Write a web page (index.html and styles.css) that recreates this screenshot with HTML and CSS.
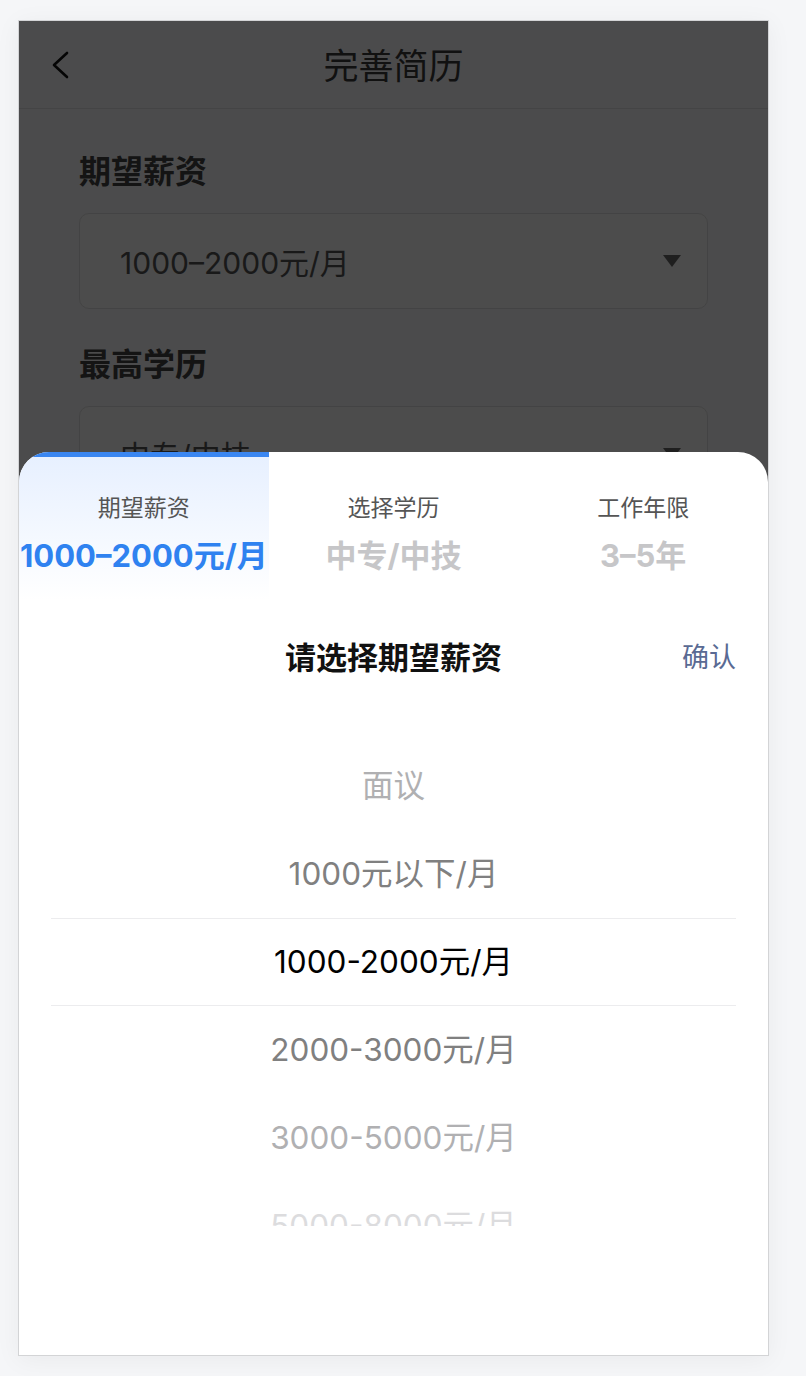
FILE: index.html
```html
<!DOCTYPE html>
<html lang="zh-CN">
<head>
  <meta charset="UTF-8">
  <meta name="viewport" content="width=device-width, initial-scale=1.0">
  <title>完善简历</title>
  <link rel="stylesheet" href="styles.css">
</head>
<body>
  <div class="phone">
    <!-- Top navigation -->
    <div class="nav">
      <svg class="nav-back" width="24" height="32" viewBox="0 0 24 32">
        <polyline points="17,3 4,15 17,27" fill="none" stroke="#111" stroke-width="2.6" stroke-linecap="round" stroke-linejoin="round"/>
      </svg>
      <div class="nav-title">完善简历</div>
      <div></div>
    </div>

    <!-- Resume form -->
    <div class="form">
      <div class="field">
        <div class="field-label">期望薪资</div>
        <div class="select"><span>1000–2000元/月</span><i class="caret"></i></div>
      </div>
      <div class="field">
        <div class="field-label">最高学历</div>
        <div class="select"><span>中专/中技</span><i class="caret"></i></div>
      </div>
    </div>

    <!-- Dark mask behind the sheet -->
    <div class="mask"></div>

    <!-- Bottom sheet with picker -->
    <div class="sheet">
      <div class="tabs">
        <div class="tab active">
          <div class="tab-name">期望薪资</div>
          <div class="tab-value">1000–2000元/月</div>
        </div>
        <div class="tab">
          <div class="tab-name">选择学历</div>
          <div class="tab-value">中专/中技</div>
        </div>
        <div class="tab">
          <div class="tab-name">工作年限</div>
          <div class="tab-value">3–5年</div>
        </div>
      </div>

      <div class="toolbar">
        <span></span>
        <span class="toolbar-title">请选择期望薪资</span>
        <span class="toolbar-ok">确认</span>
      </div>

      <div class="picker">
        <div class="picker-indicator"></div>
        <div class="picker-list">
          <div class="picker-item far">面议</div>
          <div class="picker-item near">1000元以下/月</div>
          <div class="picker-item current">1000-2000元/月</div>
          <div class="picker-item near">2000-3000元/月</div>
          <div class="picker-item far">3000-5000元/月</div>
          <div class="picker-item farthest">5000-8000元/月</div>
        </div>
      </div>
    </div>
  </div>
</body>
</html>
```

FILE: styles.css
```css
/* General styles */
* {
  box-sizing: border-box;
}

body {
  margin: 0;
  padding: 20px 0 20px 18px;
  background-color: #f5f6f8;
  font-family: Inter, "Noto Sans CJK SC", sans-serif;
}

/* Phone frame */
.phone {
  position: relative;
  width: 751px;
  height: 1336px;
  background-color: #fbfbfd;
  border: 1px solid #d3d4d6;
  overflow: hidden;
  box-shadow: 0 4px 24px rgba(0, 0, 0, 0.05);
}

/* Navigation bar */
.nav {
  display: grid;
  grid-template-columns: 120px 1fr 120px;
  align-items: center;
  height: 88px;
  border-bottom: 1px solid #e4e4e6;
}

.nav-back {
  display: block;
  margin-left: 31px;
  margin-top: 2px;
}

.nav-title {
  text-align: center;
  font-size: 35px;
  color: #3a3a3a;
  margin-top: -3px;
}

/* Form */
.form {
  padding: 39px 60px 0;
}

.field + .field {
  margin-top: 32px;
}

.field-label {
  font-size: 32px;
  line-height: 48px;
  font-weight: bold;
  color: #444;
  margin-bottom: 17px;
}

.select {
  display: flex;
  align-items: center;
  justify-content: space-between;
  height: 96px;
  padding: 0 26px 0 40px;
  border: 1px solid #e2e2e4;
  border-radius: 10px;
  background-color: #fdfdfd;
  font-size: 30px;
  color: #555;
}

.caret {
  width: 0;
  height: 0;
  border-left: 9px solid transparent;
  border-right: 9px solid transparent;
  border-top: 12px solid #6a6a6a;
}

/* Mask */
.mask {
  position: absolute;
  top: 0;
  left: 0;
  right: 0;
  bottom: 0;
  background: rgba(0, 0, 0, 0.7);
}

/* Bottom sheet */
.sheet {
  position: absolute;
  top: 431px;
  left: 0;
  right: 0;
  bottom: 0;
  background-color: #fff;
  border-radius: 30px 30px 0 0;
  overflow: hidden;
}

.tabs {
  display: grid;
  grid-template-columns: repeat(3, 1fr);
}

.tab {
  height: 148px;
  padding-top: 38px;
  text-align: center;
}

.tab.active {
  border-top: 5px solid #3a86f1;
  padding-top: 33px;
  background: linear-gradient(180deg, #e7f0ff 0%, #ffffff 100%);
}

.tab-name {
  font-size: 23px;
  line-height: 36px;
  color: #555;
}

.tab-value {
  margin-top: 10px;
  font-size: 31px;
  line-height: 40px;
  font-weight: bold;
  color: #c6c6c8;
  white-space: nowrap;
}

.tab.active .tab-value {
  color: #2f82f0;
}

/* Picker toolbar */
.toolbar {
  display: grid;
  grid-template-columns: 1fr auto 1fr;
  align-items: center;
  height: 86px;
  margin-top: 12px;
  padding: 0 32px;
}

.toolbar-title {
  font-size: 31px;
  font-weight: bold;
  color: #111;
}

.toolbar-ok {
  justify-self: end;
  font-size: 27px;
  color: #5a6a93;
}

/* Picker */
.picker {
  position: relative;
  height: 528px;
  margin: 0 32px;
  overflow: hidden;
}

.picker-indicator {
  position: absolute;
  top: 220px;
  left: 0;
  right: 0;
  height: 88px;
  border-top: 1px solid #ececee;
  border-bottom: 1px solid #ececee;
}

.picker-list {
  padding-top: 44px;
}

.picker-item {
  height: 88px;
  line-height: 88px;
  text-align: center;
  font-size: 31.5px;
  color: #000;
}

.picker-item.near {
  color: #808080;
}

.picker-item.far {
  color: #b0b0b2;
}

.picker-item.farthest {
  color: #dcdcde;
}
```
